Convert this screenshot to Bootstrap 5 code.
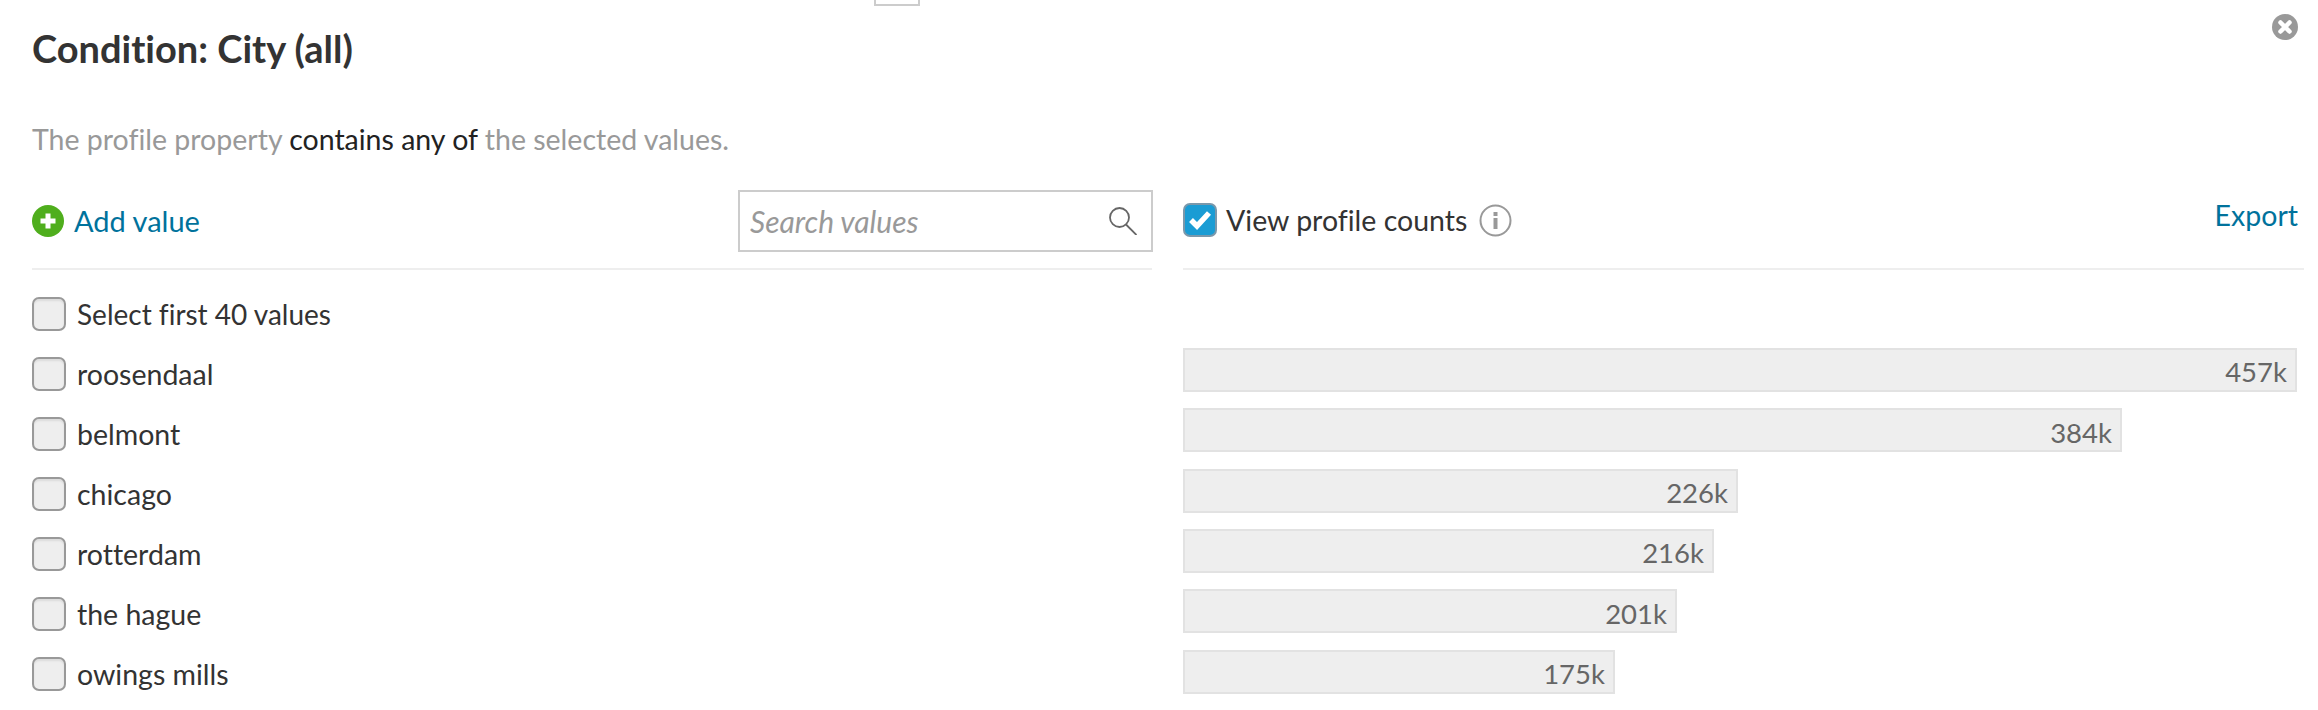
<!DOCTYPE html>
<html>
<head>
    <meta charset="UTF-8">
    <title>Condition: City (all)</title>
    <link href="https://cdn.jsdelivr.net/npm/bootstrap@5.3.0/dist/css/bootstrap.min.css" rel="stylesheet">
    <style>
        body {
            font-family: "Lato", "Liberation Sans", sans-serif;
            font-size: 28.5px;
            font-variant-ligatures: none;
            color: #333;
            background: #fff;
            overflow: hidden;
        }
        .panel {
            position: relative;
            height: 710px;
            padding: 0 14px 0 32px;
        }
        .top-tab {
            position: absolute;
            left: 874px;
            top: -2px;
            width: 46px;
            height: 8px;
            border: 2px solid #ccc;
        }
        .close-btn {
            position: absolute;
            right: 20px;
            top: 14px;
            line-height: 0;
        }
        .panel-title {
            font-size: 38px;
            font-weight: 700;
            color: #333;
            margin: 0;
            padding-top: 26px;
            line-height: 44px;
        }
        .rule-text {
            color: #999;
            margin: 49px 0 0;
            line-height: 40px;
        }
        .rule-text b {
            font-weight: 400;
            color: #222;
        }
        .cols {
            margin-top: 30px;
            gap: 31px;
        }
        .col-half {
            width: 1120px;
        }
        .col-half.right {
            width: 1121px;
        }
        .tool-row {
            height: 81px;
            border-bottom: 2px solid #eee;
        }
        .link-teal {
            color: #00729c;
            text-decoration: none;
        }
        .add-link,
        .view-counts {
            margin-top: 10px;
        }
        .add-link {
            gap: 10px;
            font-size: 29px;
        }
        .view-counts {
            gap: 9px;
        }
        .export-link {
            margin: 5px 6px 0 0;
        }
        .search-box {
            width: 415px;
            height: 62px;
            margin-right: -1px;
            border: 2px solid #ccc;
            margin-top: 1px;
            padding: 0 14px 0 10px;
        }
        .search-input {
            border: 0;
            outline: 0;
            padding: 0;
            width: 100%;
            font-style: italic;
            font-size: 30px;
            color: #333;
            background: transparent;
        }
        .search-input::placeholder {
            color: #999;
            opacity: 1;
        }
        .tick {
            width: 34px;
            height: 34px;
            flex: none;
            border: 2px solid #999;
            border-radius: 7px;
            background: #eee;
            box-shadow: inset 0 2px 2px rgba(0, 0, 0, .08);
        }
        .tick.on {
            background: #1a9cd4;
            border-color: #7a98ab;
            box-shadow: none;
        }
        .info-icon {
            margin-left: 3px;
        }
        .value-list {
            padding-top: 14px;
        }
        .value-row {
            height: 60px;
            gap: 11px;
        }
        .select-all {
            font-size: 28px;
        }
        .bar-list {
            padding-top: 78px;
        }
        .bar-line {
            height: 60.33px;
        }
        .count-bar {
            height: 44px;
            background: #eee;
            border: 2px solid #e2e2e2;
            padding: 4px 8px 0 0;
            font-size: 27.5px;
            color: #666;
        }
    </style>
</head>
<body>
    <div class="panel">
        <div class="top-tab"></div>
        <a class="close-btn" href="#" aria-label="Close">
            <svg width="26" height="26" viewBox="0 0 26 26">
                <circle cx="13" cy="13" r="13" fill="#999"/>
                <path d="M8.5 8.5l9 9M17.5 8.5l-9 9" stroke="#fff" stroke-width="4.5" stroke-linecap="round"/>
            </svg>
        </a>

        <h1 class="panel-title">Condition: City (all)</h1>
        <p class="rule-text">The profile property <b>contains any of</b> the selected values.</p>

        <div class="d-flex cols">
            <div class="col-half">
                <div class="tool-row d-flex justify-content-between align-items-start">
                    <a class="link-teal d-flex align-items-center add-link" href="#">
                        <svg width="32" height="32" viewBox="0 0 32 32">
                            <circle cx="16" cy="16" r="16" fill="#4fae1d"/>
                            <path d="M16 8.5v15M8.5 16h15" stroke="#fff" stroke-width="5"/>
                        </svg>
                        Add value
                    </a>
                    <div class="search-box d-flex align-items-center gap-2">
                        <input class="search-input" type="text" placeholder="Search values">
                        <svg class="flex-shrink-0" width="28" height="28" viewBox="0 0 28 28" fill="none" stroke="#666" stroke-width="1.8">
                            <circle cx="10.5" cy="10.5" r="9.5"/>
                            <path d="M17 17.5l10.5 10.5"/>
                        </svg>
                    </div>
                </div>
                <div class="value-list" id="valueList"></div>
            </div>

            <div class="col-half right">
                <div class="tool-row d-flex justify-content-between align-items-start">
                    <div class="d-flex align-items-center view-counts">
                        <span class="tick on d-flex align-items-center justify-content-center">
                            <svg width="24" height="20" viewBox="0 0 24 20">
                                <path d="M3 10l6 6L21 3" fill="none" stroke="#fff" stroke-width="5.5"/>
                            </svg>
                        </span>
                        <span>View profile counts</span>
                        <svg class="info-icon" width="33" height="33" viewBox="0 0 33 33">
                            <circle cx="16.5" cy="16.5" r="15" fill="none" stroke="#999" stroke-width="2"/>
                            <rect x="14.5" y="8" width="4" height="4" fill="#999"/>
                            <rect x="14.5" y="14" width="4" height="11" fill="#999"/>
                        </svg>
                    </div>
                    <a class="link-teal export-link" href="#">Export</a>
                </div>
                <div class="bar-list" id="barList"></div>
            </div>
        </div>
    </div>

    <script>
        const values = [
            ['roosendaal', '457k', 1114],
            ['belmont', '384k', 939],
            ['chicago', '226k', 555],
            ['rotterdam', '216k', 531],
            ['the hague', '201k', 494],
            ['owings mills', '175k', 432]
        ];

        function addRow(text, labelClass) {
            const row = document.createElement('div');
            row.className = 'value-row d-flex align-items-center';
            row.innerHTML = '<span class="tick"></span><span></span>';
            row.lastChild.textContent = text;
            if (labelClass) row.lastChild.className = labelClass;
            document.getElementById('valueList').appendChild(row);
        }

        addRow('Select first 40 values', 'select-all');
        values.forEach(function(v) {
            addRow(v[0]);
            const line = document.createElement('div');
            line.className = 'bar-line';
            const bar = document.createElement('div');
            bar.className = 'count-bar d-flex align-items-center justify-content-end';
            bar.style.width = v[2] + 'px';
            bar.textContent = v[1];
            line.appendChild(bar);
            document.getElementById('barList').appendChild(line);
        });
    </script>
    <script src="https://cdn.jsdelivr.net/npm/bootstrap@5.3.0/dist/js/bootstrap.bundle.min.js"></script>
</body>
</html>
